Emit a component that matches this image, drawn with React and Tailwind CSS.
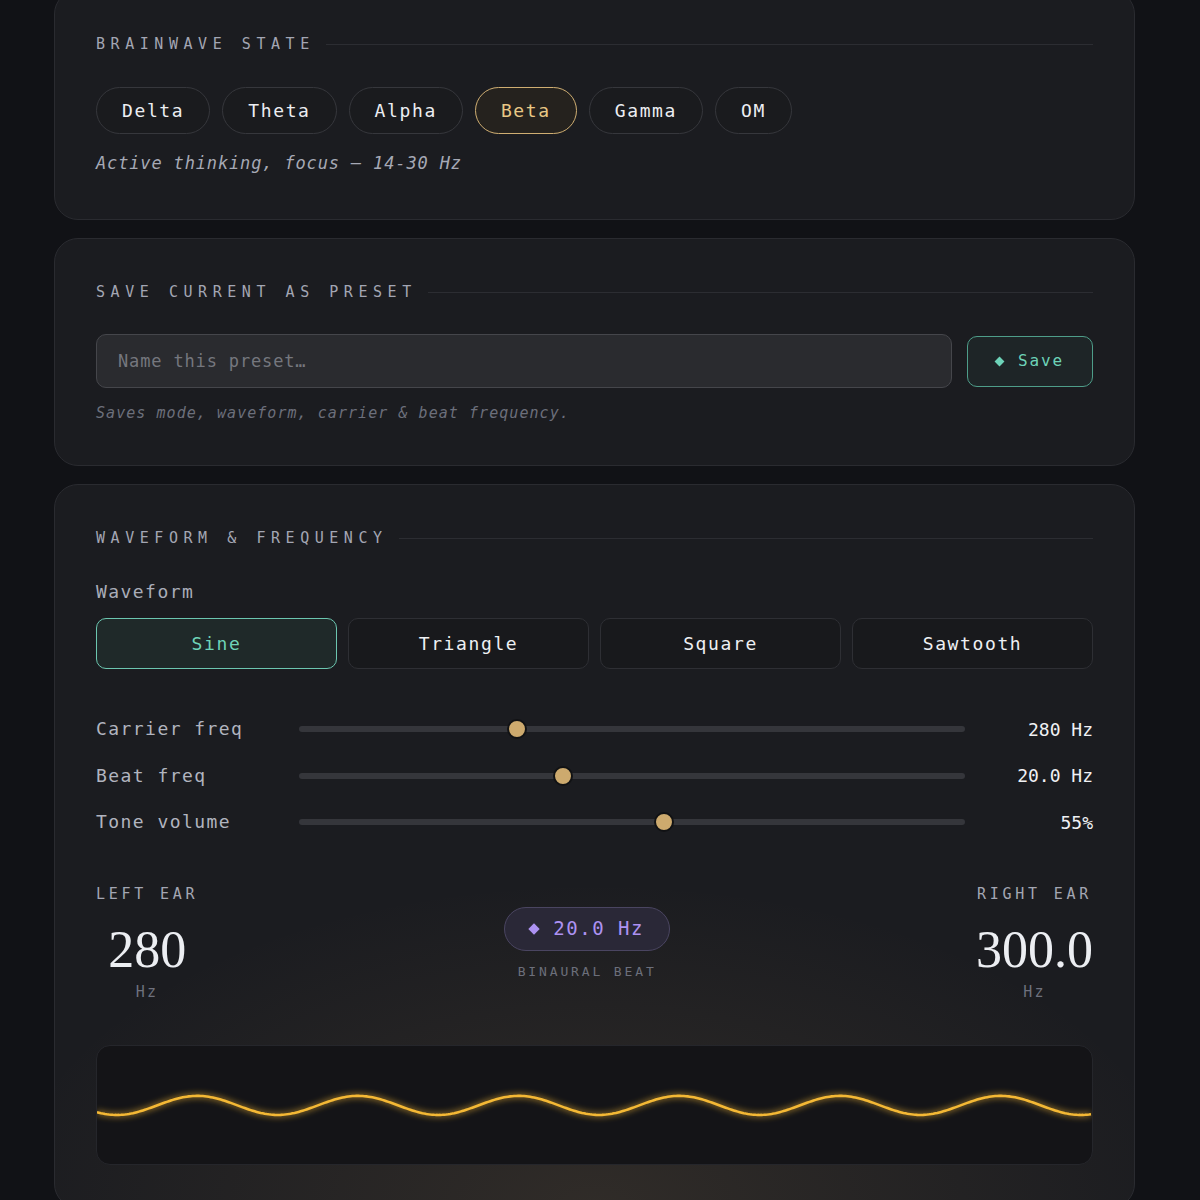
import { useState } from 'react'

const states = ['Delta', 'Theta', 'Alpha', 'Beta', 'Gamma', 'OM']
const waveforms = ['Sine', 'Triangle', 'Square', 'Sawtooth']
const sliders = [
  { label: 'Carrier freq', value: '280 Hz', pct: 32.7 },
  { label: 'Beat freq', value: '20.0 Hz', pct: 39.6 },
  { label: 'Tone volume', value: '55%', pct: 54.8 },
]

// sine path for the scope: period 161px, trough at x=20
const buildWave = () => {
  const pts = []
  for (let x = 0; x <= 997; x += 2) {
    const y = 60.4 + 9.7 * Math.cos((2 * Math.PI * (x - 20)) / 161)
    pts.push(`${x === 0 ? 'M' : 'L'}${x} ${y.toFixed(2)}`)
  }
  return pts.join(' ')
}
const wavePath = buildWave()

function SectionTitle({ children }) {
  return (
    <div className="flex items-center gap-[11px] h-[26px]">
      <span className="text-[15px] tracking-[0.37em] text-[#a3a6b3] whitespace-nowrap">{children}</span>
      <div className="flex-1 h-px bg-[#2c2d32]" />
    </div>
  )
}

function App() {
  const [state, setState] = useState('Beta')
  const [wave, setWave] = useState('Sine')

  return (
    <div className="min-h-screen bg-[#111216] font-['DejaVu_Sans_Mono',monospace] pl-[54px] pr-[65px] overflow-hidden">
      <div className="-mt-[10px] flex flex-col gap-[18px]">
        {/* Brainwave state */}
        <section className="rounded-[24px] border border-[#2a2b30] bg-[#1b1c20] px-[41px] pt-10 pb-[44px]">
          <SectionTitle>BRAINWAVE STATE</SectionTitle>
          <div className="mt-[30px] flex gap-[12px]">
            {states.map(s => (
              <button
                key={s}
                onClick={() => setState(s)}
                className={s === state
                  ? 'h-[47px] px-[25px] rounded-full border-[1.5px] border-[#cfae72] bg-[#25221e] text-[#e8c785] text-[18px] tracking-[0.09em]'
                  : 'h-[47px] px-[25px] rounded-full border border-[#36373c] bg-[#1a1b1e] text-[#eceef2] text-[18px] tracking-[0.09em]'}
              >
                {s}
              </button>
            ))}
          </div>
          <p className="mt-[17px] h-6 leading-6 italic text-[17px] tracking-[0.05em] text-[#a6a9b5]">
            Active thinking, focus — 14-30 Hz
          </p>
        </section>

        {/* Save preset */}
        <section className="rounded-[24px] border border-[#2a2b30] bg-[#1b1c20] px-[41px] pt-10 pb-[42px]">
          <SectionTitle>SAVE CURRENT AS PRESET</SectionTitle>
          <div className="mt-[29px] flex items-center gap-[15px]">
            <input
              placeholder="Name this preset…"
              className="flex-1 h-[54px] rounded-[10px] border-[1.5px] border-[#45464b] bg-[#2a2b2f] px-[21px] text-[17px] tracking-[0.05em] text-[#e6e7ea] placeholder:text-[#75777e] outline-none"
            />
            <button className="w-[126px] h-[51px] rounded-[10px] border-[1.5px] border-[#4e9d89] bg-[#1e2527] text-[#6dd3b8] flex items-center justify-center">
              <span className="w-[7px] h-[7px] rotate-45 bg-[#6dd3b8] mr-[15px]" />
              <span className="text-[16px] tracking-[0.12em]">Save</span>
            </button>
          </div>
          <p className="mt-[15px] h-5 leading-5 italic text-[15px] tracking-[0.07em] text-[#6c6f7b]">
            Saves mode, waveform, carrier &amp; beat frequency.
          </p>
        </section>

        {/* Waveform & frequency */}
        <section className="rounded-[24px] border border-[#2a2b30] bg-[#1b1c20] bg-[radial-gradient(ellipse_55%_45%_at_50%_100%,rgba(190,150,95,0.13),transparent)] px-[41px] pt-10 pb-[42px]">
          <SectionTitle>WAVEFORM &amp; FREQUENCY</SectionTitle>

          <div className="mt-[29px] h-6 leading-6 text-[18px] tracking-[0.08em] text-[#a9acb8]">Waveform</div>
          <div className="mt-[14px] grid grid-cols-4 gap-[11px]">
            {waveforms.map(w => (
              <button
                key={w}
                onClick={() => setWave(w)}
                className={w === wave
                  ? 'h-[51px] rounded-[10px] border-[1.5px] border-[#6cc6b0] bg-[#1f2929] text-[#6fd3b8] text-[18px] tracking-[0.09em]'
                  : 'h-[51px] rounded-[10px] border border-[#2e2f34] bg-[#18191c] text-[#eef0f3] text-[18px] tracking-[0.09em]'}
              >
                {w}
              </button>
            ))}
          </div>

          <div className="mt-[45px] grid grid-cols-[203px_1fr_128px] items-center gap-y-[16.5px]">
            {sliders.map(s => (
              <div key={s.label} className="contents">
                <div className="h-[30px] leading-[30px] text-[18px] tracking-[0.08em] text-[#b1b4bf]">{s.label}</div>
                <div className="relative h-[6px] rounded-full bg-[#35363b]">
                  <div
                    className="absolute top-1/2 -translate-y-1/2 w-5 h-5 rounded-full bg-[#cdaa6e] border-2 border-[#111214]"
                    style={{ left: `calc(${s.pct}% - 10px)` }}
                  />
                </div>
                <div className="text-right text-[18px] text-[#f0f1f4]">{s.value}</div>
              </div>
            ))}
          </div>

          <div className="mt-[47px] flex items-center justify-between">
            <div className="flex flex-col items-center">
              <div className="text-[15px] tracking-[0.25em] text-[#a3a6b2] leading-5">LEFT EAR</div>
              <div className="mt-[20px] font-['Liberation_Serif',serif] text-[52px] leading-[52px] text-[#eceef2]">280</div>
              <div className="mt-[5px] text-[15px] tracking-[0.15em] text-[#6e717d]">Hz</div>
            </div>
            <div className="flex flex-col items-center">
              <div className="h-[44px] px-[25px] rounded-full border-[1.5px] border-[#4a4561] bg-[#2a2837] flex items-center text-[#ad92f2]">
                <span className="w-[8px] h-[8px] rotate-45 bg-[#ad92f2] mr-[15px]" />
                <span className="text-[19px] tracking-[0.08em]">20.0 Hz</span>
              </div>
              <div className="mt-[11px] text-[13px] tracking-[0.22em] text-[#6c6f7b]">BINAURAL BEAT</div>
            </div>
            <div className="flex flex-col items-center">
              <div className="text-[15px] tracking-[0.25em] text-[#a3a6b2] leading-5">RIGHT EAR</div>
              <div className="mt-[20px] font-['Liberation_Serif',serif] text-[52px] leading-[52px] text-[#eceef2]">300.0</div>
              <div className="mt-[5px] text-[15px] tracking-[0.15em] text-[#6e717d]">Hz</div>
            </div>
          </div>

          <div className="mt-[41px] h-[120px] rounded-[14px] border border-[#25262b] bg-[#141417] overflow-hidden">
            <svg viewBox="0 0 997 120" preserveAspectRatio="none" className="w-full h-full block">
              <defs>
                <filter id="glow" x="-5%" y="-50%" width="110%" height="200%">
                  <feGaussianBlur stdDeviation="3" result="b" />
                  <feMerge>
                    <feMergeNode in="b" />
                    <feMergeNode in="SourceGraphic" />
                  </feMerge>
                </filter>
              </defs>
              <path d={wavePath} fill="none" stroke="#f4b834" strokeWidth="2.6" filter="url(#glow)" />
            </svg>
          </div>
        </section>
      </div>
    </div>
  )
}

export default App
